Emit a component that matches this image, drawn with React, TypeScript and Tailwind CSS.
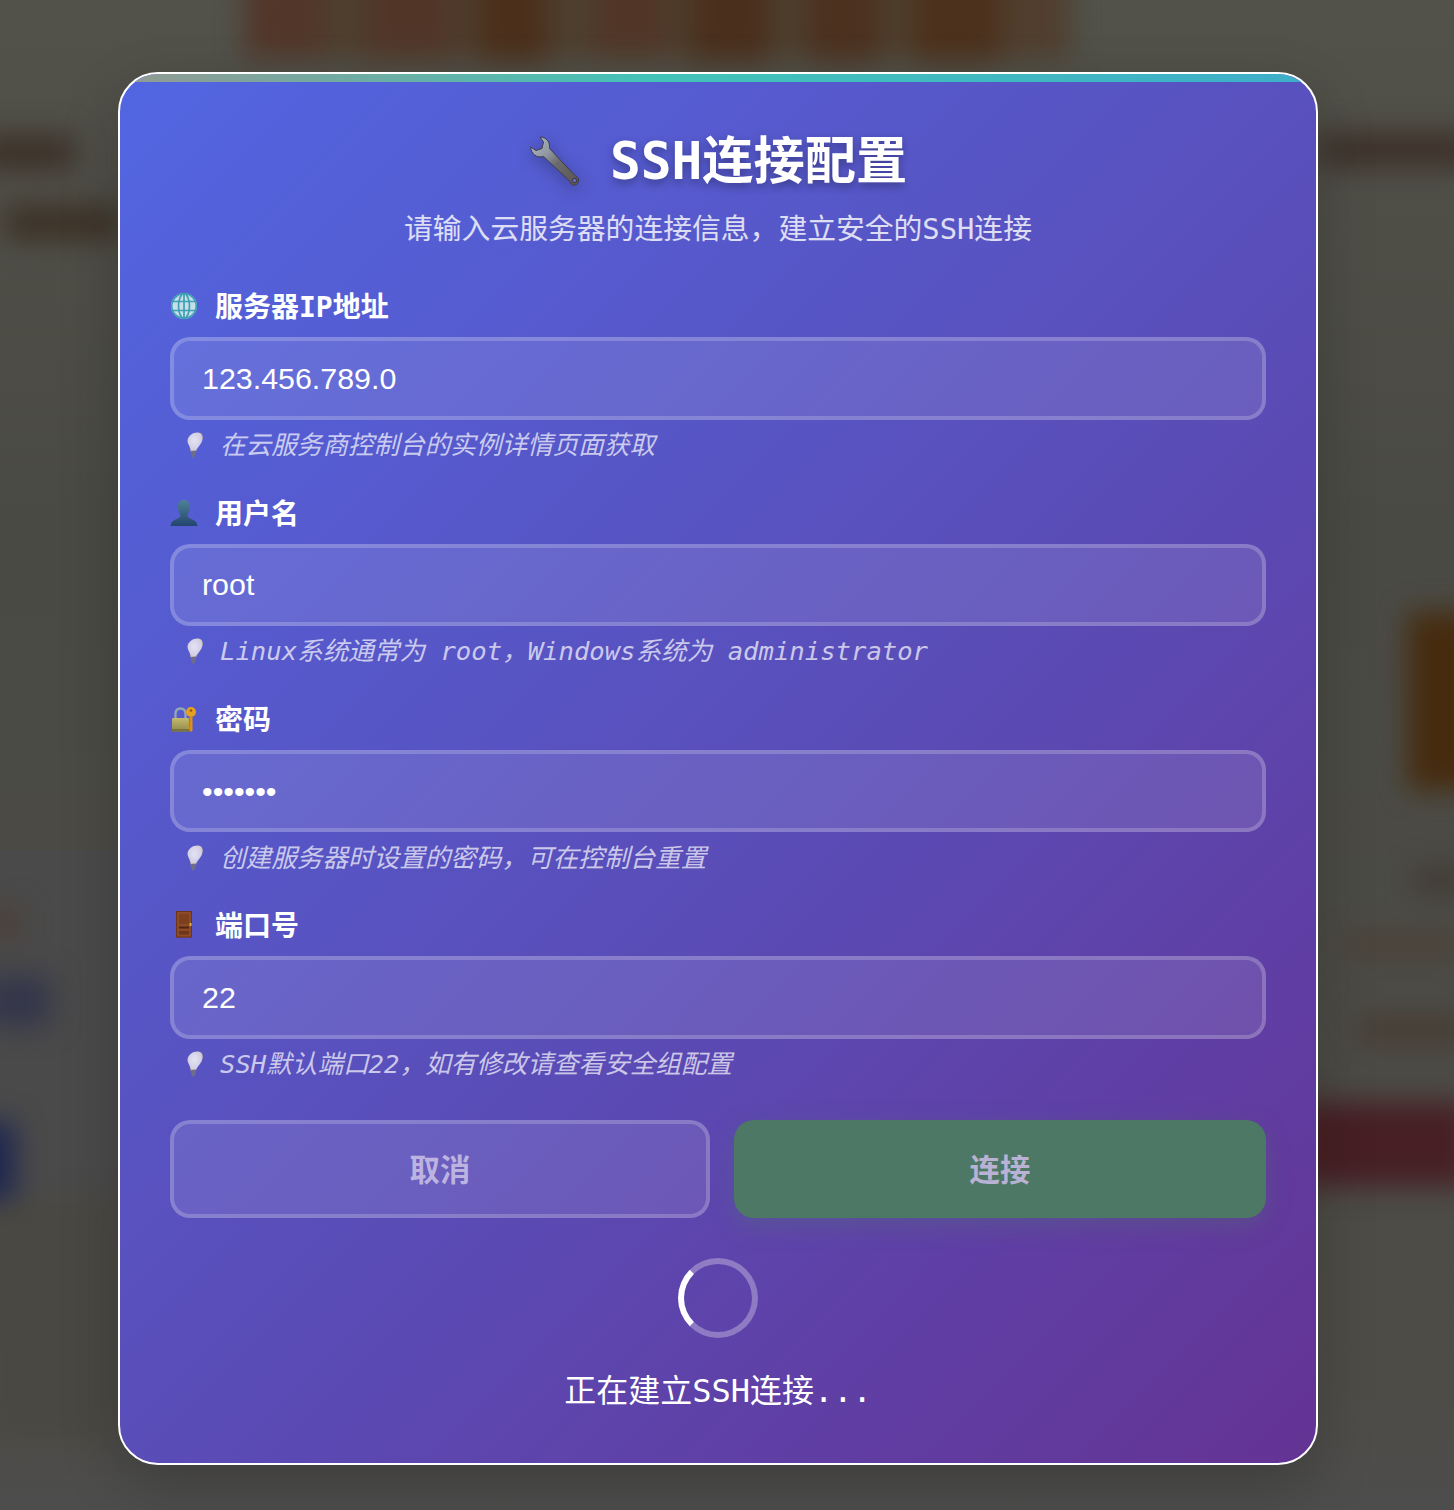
import React from "react";

const MONO = "font-['DejaVu_Sans_Mono','Noto_Sans_CJK_SC',monospace]";
const CJK = "font-['Noto_Sans_CJK_SC','DejaVu_Sans_Mono',sans-serif]";

function Backdrop() {
  const blobs: [number, number, number, number, string][] = [
    [245, -30, 825, 88, "#4e3f2e"],
    [245, -30, 80, 88, "#523629"],
    [365, -30, 90, 90, "#513628"],
    [478, -30, 70, 92, "#4b2f1b"],
    [594, -30, 74, 88, "#513627"],
    [690, -30, 80, 92, "#4a2f1c"],
    [807, -30, 73, 92, "#4c311f"],
    [913, -30, 87, 92, "#4c311c"],
    [1000, -30, 62, 80, "#513e2e"],
    [-20, 135, 95, 35, "#3c3028"],
    [5, 205, 115, 35, "#3c3126"],
    [1318, 132, 160, 36, "#3d312a"],
    [1408, 612, 70, 178, "#462b0e"],
    [1415, 868, 50, 24, "#403832"],
    [1345, 936, 120, 18, "#4c4036"],
    [1360, 1018, 110, 24, "#463b31"],
    [1300, 1102, 170, 84, "#471f24"],
    [-10, 908, 30, 30, "#4c3f36"],
    [-15, 975, 65, 52, "#34364a"],
    [-30, 1122, 45, 78, "#1e2650"],
    [-10, 1200, 128, 240, "#4a4842"],
  ];
  return (
    <svg viewBox="0 0 1454 1510" className="absolute inset-0 h-[1510px] w-[1454px]">
      <defs>
        <linearGradient id="base" x1="0" y1="0" x2="0" y2="1">
          <stop offset="0" stopColor="#52524a" />
          <stop offset="0.35" stopColor="#4a4a44" />
          <stop offset="0.9" stopColor="#4d4c46" />
          <stop offset="1" stopColor="#4d4d4d" />
        </linearGradient>
        <filter id="soft" x="-50%" y="-50%" width="200%" height="200%" colorInterpolationFilters="sRGB">
          <feGaussianBlur stdDeviation="14" />
        </filter>
      </defs>
      <rect width="1454" height="1510" fill="url(#base)" />
      <rect x="0" y="850" width="118" height="400" fill="#4a4a4a" />
      <g filter="url(#soft)">
        {blobs.map(([x, y, w, h, c], i) => (
          <rect key={i} x={x} y={y} width={w} height={h} fill={c} />
        ))}
      </g>
    </svg>
  );
}

function Wrench() {
  return (
    <svg viewBox="0 0 54 54" className="h-[54px] w-[54px] shrink-0 drop-shadow-[0_4px_8px_rgba(0,0,0,0.3)]">
      <defs>
        <linearGradient id="wr" x1="0" y1="0" x2="1" y2="1">
          <stop offset="0" stopColor="#b0bdc8" />
          <stop offset="0.35" stopColor="#8f96a0" />
          <stop offset="0.55" stopColor="#6b6a6e" />
          <stop offset="1" stopColor="#5a5450" />
        </linearGradient>
      </defs>
      <path
        d="M11 2 C17 2 21.500 7 20.500 13.500 L46.500 41 C50.500 42.500 50.500 47.500 47.500 49.500 C44.500 51 41.500 50 41 46.500 L14.500 21.500 C8 23.500 2 19 1.700 12 L7 15.500 L13 13.500 L14.500 7 Z"
        fill="url(#wr)"
        stroke="#3f3d46"
        strokeWidth="1"
        strokeLinejoin="round"
      />
      <circle cx="45.500" cy="45.500" r="2.200" fill="#6a6cc0" stroke="#35333c" strokeWidth="1" />
    </svg>
  );
}

function Globe() {
  return (
    <svg viewBox="0 0 28 28" className="h-[28px] w-[28px] shrink-0">
      <circle cx="14" cy="14" r="13" fill="#c6dfe9" />
      <g fill="none" stroke="#3ea0b4" strokeWidth="1.700">
        <circle cx="14" cy="14" r="12.300" />
        <ellipse cx="14" cy="14" rx="5.500" ry="12.300" />
        <path d="M14 1.700V26.300M2.500 9.500H25.500M2.500 18.500H25.500" />
      </g>
    </svg>
  );
}

function Person() {
  return (
    <svg viewBox="0 0 28 28" className="h-[28px] w-[28px] shrink-0">
      <defs>
        <linearGradient id="pe" x1="0" y1="0" x2="0" y2="1">
          <stop offset="0" stopColor="#4f8296" />
          <stop offset="1" stopColor="#23456f" />
        </linearGradient>
      </defs>
      <path
        d="M14 1 C9.500 1 7.500 4.500 8 9 C8.400 12.500 10 15 10.500 16.500 C10.500 18.500 8 19.500 5 20.800 C2.500 21.800 1 23.500 .5 27 H27.500 C27 23.500 25.500 21.800 23 20.800 C20 19.500 17.500 18.500 17.500 16.500 C18 15 19.600 12.500 20 9 C20.500 4.500 18.500 1 14 1 Z"
        fill="url(#pe)"
      />
    </svg>
  );
}

function LockKey() {
  return (
    <svg viewBox="0 0 28 28" className="h-[28px] w-[28px] shrink-0">
      <defs>
        <linearGradient id="lk" x1="0" y1="0" x2="0" y2="1">
          <stop offset="0" stopColor="#c4b96c" />
          <stop offset="1" stopColor="#8e8a4c" />
        </linearGradient>
      </defs>
      <path d="M5.500 13 V9 C5.500 5 8 3.500 10.500 3.500 C13 3.500 15.500 5 15.500 9 V13" fill="none" stroke="#93a8b4" strokeWidth="2.300" />
      <rect x="2" y="13" width="17" height="13.500" rx="1.200" fill="url(#lk)" />
      <path d="M2 24 H19 V26.500 H2 Z" fill="#77733f" />
      <circle cx="21" cy="7" r="5" fill="#e6a020" />
      <circle cx="21" cy="5.500" r="1.300" fill="#8a5a10" />
      <path d="M19.500 11 H22.500 V25.500 L21 27 L19.500 25.500 Z" fill="#d8901c" />
      <path d="M19.500 18 H17.800 V20 H19.500 M19.500 22 H18 V24 H19.500" fill="#d8901c" />
    </svg>
  );
}

function Door() {
  return (
    <svg viewBox="0 0 28 28" className="h-[28px] w-[28px] shrink-0">
      <rect x="6" y="0" width="16" height="26.500" fill="#8d4a26" />
      <rect x="6.500" y=".5" width="15" height="25.500" fill="none" stroke="#6b351b" strokeWidth="1" />
      <rect x="9" y="3" width="10" height="10" fill="#7d401f" />
      <rect x="9" y="15.500" width="10" height="2" fill="#4f2612" />
      <rect x="9" y="20" width="10" height="3.500" fill="#6d3519" />
      <rect x="19.500" y="12" width="2" height="3" fill="#e0b030" />
    </svg>
  );
}

function Bulb() {
  return (
    <svg viewBox="0 0 18 26" className="h-[26px] w-[18px] shrink-0">
      <defs>
        <radialGradient id="bu" cx="0.45" cy="0.4" r="0.62">
          <stop offset="0" stopColor="#e4e3f3" />
          <stop offset="0.7" stopColor="#d2cfe6" />
          <stop offset="1" stopColor="#d8c27c" />
        </radialGradient>
      </defs>
      <path d="M12.500 .6 C7.500 0 2 3.500 1.500 8.500 C1.300 11.500 3.500 13.500 4.300 17 L5 20.500 L10 19.500 C10.500 16.500 13.500 14 15.500 10.500 C18 5.500 16.500 1.200 12.500 .6 Z" fill="url(#bu)" />
      <path d="M4.700 19 L10.300 18.500 L9.500 22.500 L8 25.500 L6.200 25.500 L5.200 22.500 Z" fill="#6e6e88" />
    </svg>
  );
}

function Field({
  icon,
  label,
  value,
  type,
  hint,
}: {
  icon: React.ReactNode;
  label: string;
  value: string;
  type: string;
  hint: string;
}) {
  return (
    <div className="mb-[30px]">
      <label className={`mb-[11px] flex h-[40px] items-center gap-[17px] text-[28px] font-bold text-white ${MONO}`}>
        {icon}
        <span className="translate-y-[2px]">{label}</span>
      </label>
      <input
        readOnly
        type={type}
        value={value}
        className="block h-[82.45px] w-full rounded-[20px] border-4 border-white/20 bg-white/10 px-[28px] font-['Liberation_Sans',sans-serif] text-[30.4px] text-white outline-none"
      />
      <div className={`mt-[8px] flex h-[35px] items-center gap-[16px] pl-[16px] text-[25.6px] italic text-white/70 ${MONO}`}>
        <Bulb />
        <span className="whitespace-pre">{hint}</span>
      </div>
    </div>
  );
}

export default function App() {
  return (
    <div className="relative flex min-h-[1510px] justify-center overflow-hidden bg-[#50504c] pr-[18px] pt-[72px]">
      <Backdrop />

      <div className="relative mb-[45px] h-fit w-[1200px] overflow-hidden rounded-[40px] border-2 border-white bg-[linear-gradient(135deg,#5266e2_0%,#594fbb_50%,#643394_100%)] px-[50px] pb-[55px] pt-[48px] shadow-[0_20px_60px_rgba(0,0,0,0.2)]">
        <div className="absolute inset-x-0 top-0 h-[8px] bg-[linear-gradient(90deg,#929a92_0%,#42c3b8_45%,#3eaec9_100%)]" />

        <h1 className={`mt-[2px] flex h-[76px] items-center justify-center gap-[27px] text-[51.2px] font-bold leading-none text-white [text-shadow:0_4px_8px_rgba(0,0,0,0.3)] ${MONO}`}>
          <Wrench />
          <span>SSH连接配置</span>
        </h1>
        <p className={`mb-[36.1px] mt-[10px] flex h-[40px] items-center justify-center text-[28.8px] text-white/80 ${MONO}`}>
          请输入云服务器的连接信息，建立安全的SSH连接
        </p>

        <Field icon={<Globe />} label="服务器IP地址" value="123.456.789.0" type="text" hint="在云服务商控制台的实例详情页面获取" />
        <Field icon={<Person />} label="用户名" value="root" type="text" hint="Linux系统通常为 root，Windows系统为 administrator" />
        <Field icon={<LockKey />} label="密码" value="1234567" type="password" hint="创建服务器时设置的密码，可在控制台重置" />
        <Field icon={<Door />} label="端口号" value="22" type="text" hint="SSH默认端口22，如有修改请查看安全组配置" />

        <div className="mt-[38px] flex gap-[24px]">
          <button className={`h-[98px] flex-1 rounded-[20px] border-4 border-white/20 bg-white/10 text-[30.4px] font-bold text-[#bdb3e0] ${CJK}`}>
            取消
          </button>
          <button className={`h-[98px] flex-1 rounded-[20px] bg-[#4e7866] text-[30.4px] font-bold text-[#b9b2d4] shadow-[0_8px_24px_rgba(78,122,104,0.3)] ${CJK}`}>
            连接
          </button>
        </div>

        <div className="mt-[40px] flex flex-col items-center">
          <div className="h-[80px] w-[80px] rounded-full border-[6px] border-white/30 border-l-white" />
          <p className={`mt-[36px] h-[34px] text-[32px] leading-[34px] text-white ${MONO}`}>正在建立SSH连接...</p>
        </div>
      </div>
    </div>
  );
}
